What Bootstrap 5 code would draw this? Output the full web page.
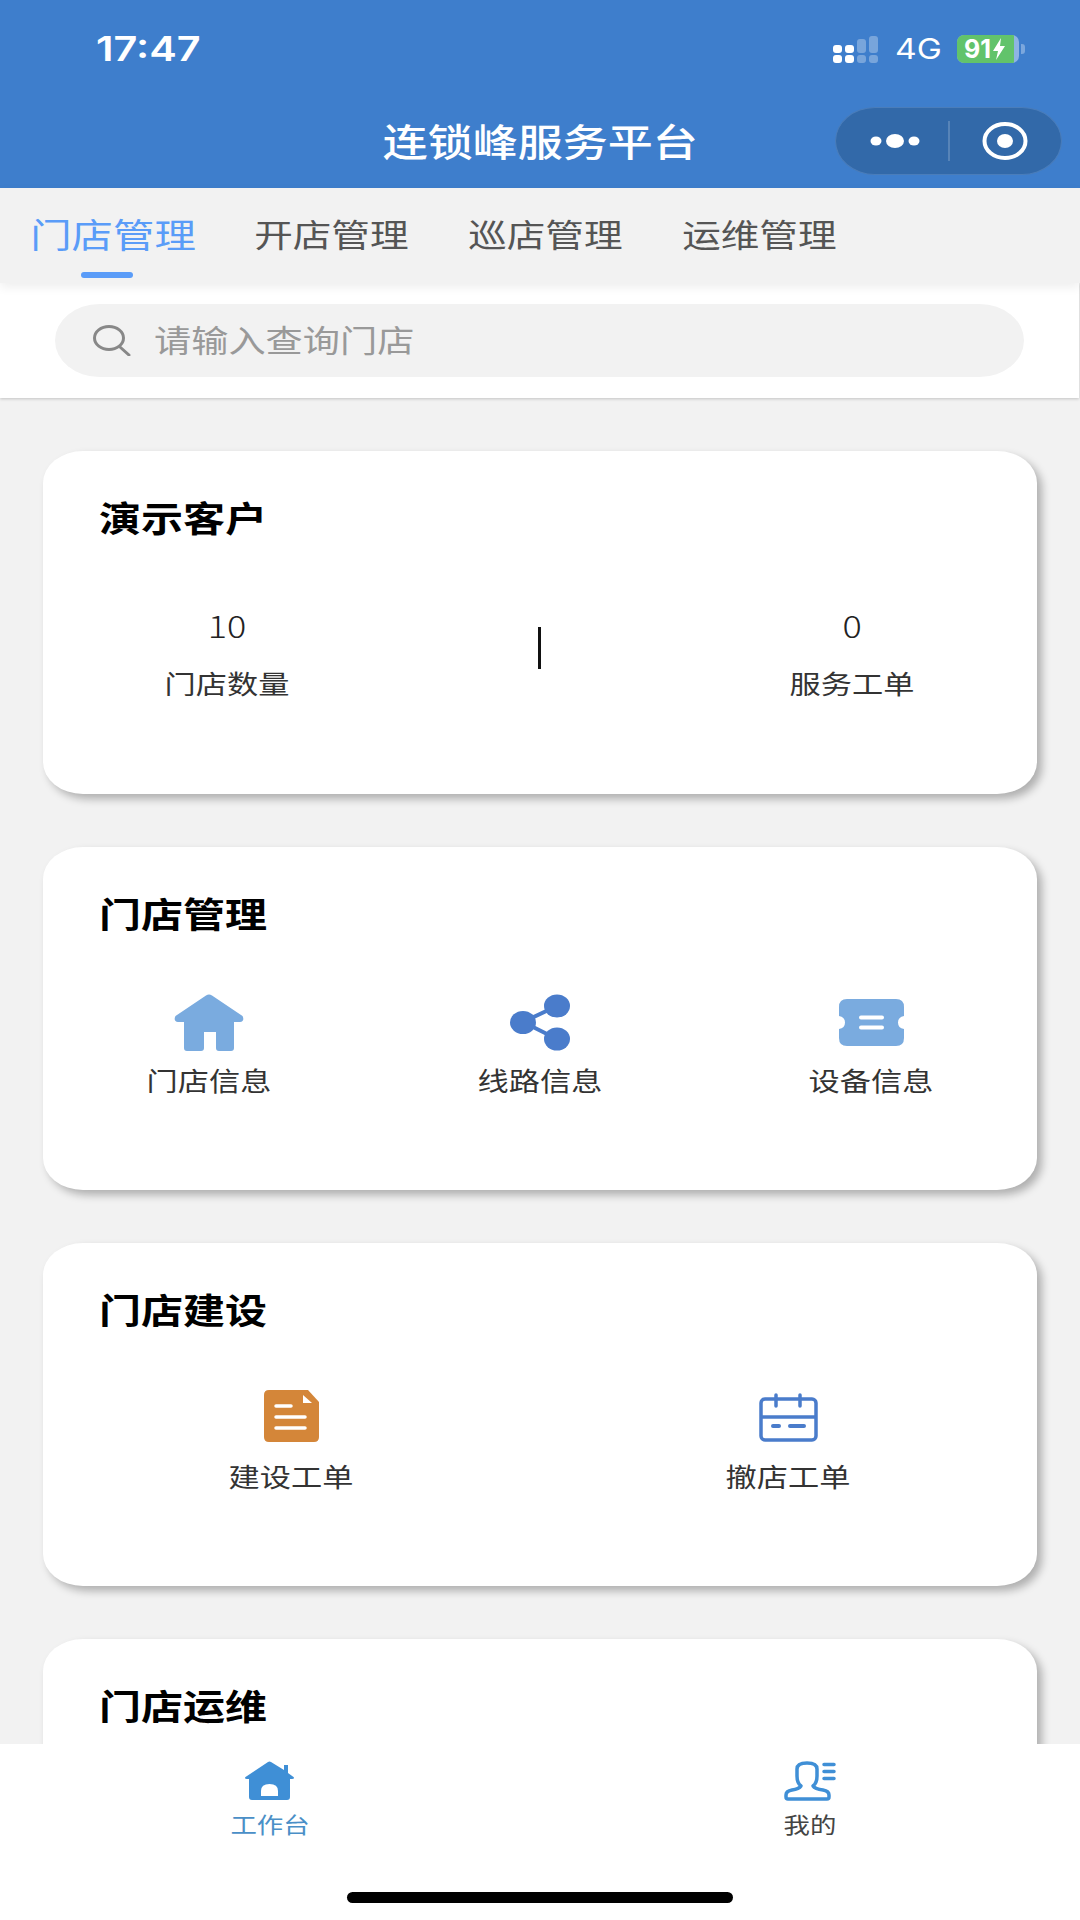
<!DOCTYPE html>
<html lang="zh-CN">
<head>
<meta charset="utf-8">
<title>连锁峰服务平台</title>
<link href="https://cdn.jsdelivr.net/npm/bootstrap@5.3.0/dist/css/bootstrap.min.css" rel="stylesheet">
<style>
html,body{height:1920px;overflow:hidden;}
body{background:#f2f2f2;font-family:"Noto Sans CJK SC","Noto Sans",sans-serif;color:#333;}
.wx{display:inline-block;transform:scaleX(1.2);white-space:nowrap;}
.wl{transform-origin:left center;}
.app-head{background:#3e7ecc;height:188px;color:#fff;}
.status-row{height:98px;padding:0 55px 0 96px;}
.clock{font:600 34.5px/1 Inter,sans-serif;}
.net{font:400 28px/1 Inter,sans-serif;margin:0 16px 0 18px;width:45px;text-align:center;}
.batt{height:28px;width:62px;border-radius:7px;overflow:hidden;background:#8eb4e3;}
.batt-fill{width:57px;background:#62c36b;font:700 25px/28px Inter,sans-serif;padding-left:7px;gap:1px;}
.batt-tip{width:4px;height:10px;background:#7ba7dd;border-radius:0 3px 3px 0;margin-left:2px;}
.title-row{display:grid;grid-template-columns:1fr auto 1fr;height:86px;align-items:center;}
.app-title{font-size:37.5px;font-weight:500;line-height:44px;margin-top:-2px;}
.capsule{width:227px;height:68px;background:#3269a9;border:1px solid #4a7dba;border-radius:40px/34px;margin-right:18px;justify-self:end;}
.cap-dots{margin-left:33px;}
.cap-div{width:2px;height:40px;background:rgba(255,255,255,.18);margin:0 31px 0 27px;}
.tab-strip{background:#f2f2f2;height:95px;padding-left:6px;position:relative;z-index:2;box-shadow:0 4px 10px rgba(0,0,0,.07);}
.tab-item{width:214px;padding-top:25px;color:#555;font-size:32.2px;line-height:40px;}
.tab-on{color:#5a9cf8;font-size:34.5px;margin-right:4px;}
.tab-bar{width:52px;height:6px;border-radius:3px;background:#5a9cf8;margin:19px 12px 0 0;}
.search-panel{background:#fff;height:115px;padding:21px 55px 0 55px;margin-right:1px;box-shadow:0 1px 3px rgba(0,0,0,.2);position:relative;}
.search-pill{background:#f2f2f2;height:73px;border-radius:45px/37px;padding-left:38px;color:#999;font-size:31px;}
.search-text{margin-left:23px;margin-top:-2px;}
.cards-area{padding:53px 43px 0;}
.tile{height:343px;border:0;border-radius:40px/32px;background:#fff;box-shadow:5px 5px 8px rgba(0,0,0,.28);padding:46px 0 0;margin-bottom:53px;}
.tile-end{height:240px;margin-bottom:0;}
.tile-head{font-size:35px;line-height:40px;font-weight:700;color:#000;padding-left:56px;}
.stat-row{margin-top:70px;padding:0 85px 0 84px;}
.stat-cell{width:200px;}
.stat-num{font-size:30px;line-height:36px;font-weight:300;color:#222;}
.stat-label{font-size:26px;line-height:36px;margin-top:22px;color:#333;}
.stat-line{width:3px;height:42px;background:#111;margin-top:20px;}
.fn-row{margin:61px 0 0;}
.fn-box{height:60px;}
.fn-label{font-size:26px;line-height:36px;margin-top:8px;color:#333;}
.dock{position:fixed;left:0;right:0;bottom:0;height:176px;background:#fff;z-index:5;}
.dock-icon{height:42px;margin-top:17px;}
.dock-label{font-size:22px;line-height:30px;margin-top:5px;color:#444;}
.dock-on{color:#4a8fc7;}
.home-bar{position:absolute;left:347px;bottom:17px;width:386px;height:11px;border-radius:6px;background:#000;}
</style>
</head>
<body>
<header class="app-head">
  <div class="status-row d-flex align-items-center justify-content-between">
    <span class="clock wx wl">17:47</span>
    <div class="d-flex align-items-center">
      <svg width="45" height="27" viewBox="0 0 45 27" fill="#fff">
        <rect x="0" y="9" width="9" height="8" rx="3"/><rect x="0" y="19" width="9" height="8" rx="3"/>
        <rect x="12" y="9" width="9" height="8" rx="3"/><rect x="12" y="19" width="9" height="8" rx="3"/>
        <g fill-opacity=".3"><rect x="24" y="3" width="9" height="14" rx="3"/><rect x="24" y="19" width="9" height="8" rx="3"/>
        <rect x="36" y="0" width="9" height="17" rx="3"/><rect x="36" y="19" width="9" height="8" rx="3"/></g>
      </svg>
      <span class="net wx">4G</span>
      <div class="batt d-flex"><div class="batt-fill d-flex align-items-center">91<svg width="14" height="22" viewBox="0 0 14 22" fill="#fff"><path d="M9 0 1 13h5l-2 9 9-14H8z"/></svg></div></div>
      <div class="batt-tip"></div>
    </div>
  </div>
  <div class="title-row">
    <span></span>
    <span class="app-title wx">连锁峰服务平台</span>
    <div class="capsule d-flex align-items-center">
      <svg class="cap-dots" width="52" height="16" viewBox="0 0 52 16" fill="#fff"><ellipse cx="7" cy="8" rx="5.5" ry="4.5"/><ellipse cx="26" cy="8" rx="9" ry="7"/><ellipse cx="45" cy="8" rx="5.5" ry="4.5"/></svg>
      <div class="cap-div"></div>
      <svg width="48" height="40" viewBox="0 0 48 40"><ellipse cx="24" cy="20" rx="20.5" ry="17" fill="none" stroke="#fff" stroke-width="4"/><ellipse cx="24" cy="20" rx="8" ry="7" fill="#fff"/></svg>
    </div>
  </div>
</header>

<nav class="tab-strip d-flex">
  <div class="tab-item tab-on d-flex flex-column align-items-center"><span class="wx">门店管理</span><div class="tab-bar"></div></div>
  <div class="tab-item text-center"><span class="wx">开店管理</span></div>
  <div class="tab-item text-center"><span class="wx">巡店管理</span></div>
  <div class="tab-item text-center"><span class="wx">运维管理</span></div>
</nav>

<div class="search-panel">
  <div class="search-pill d-flex align-items-center">
    <svg width="38" height="31" viewBox="0 0 38 31" fill="none" stroke="#888" stroke-width="3"><ellipse cx="16" cy="13" rx="14.5" ry="11.5"/><path d="M27 22l9 8" stroke-linecap="round"/></svg>
    <span class="search-text wx wl">请输入查询门店</span>
  </div>
</div>

<main class="cards-area">
  <section class="card tile">
    <div class="tile-head"><span class="wx wl">演示客户</span></div>
    <div class="stat-row d-flex justify-content-between align-items-start">
      <div class="stat-cell text-center"><div class="stat-num"><span class="wx">10</span></div><div class="stat-label"><span class="wx">门店数量</span></div></div>
      <div class="stat-line"></div>
      <div class="stat-cell text-center"><div class="stat-num"><span class="wx">0</span></div><div class="stat-label"><span class="wx">服务工单</span></div></div>
    </div>
  </section>

  <section class="card tile">
    <div class="tile-head"><span class="wx wl">门店管理</span></div>
    <div class="row g-0 fn-row text-center">
      <div class="col-4">
        <div class="fn-box d-flex justify-content-center">
          <svg width="70" height="57" viewBox="0 0 70 57" fill="#7aabdf"><path d="M32 1.500Q35-.5 38 1.500L68.500 22Q71 27 66 28H60V54Q60 57 57 57H45Q42 57 42 54V38H30V54Q30 57 27 57H13Q10 57 10 54V28H4Q-1 27 1.500 22Z"/></svg>
        </div>
        <div class="fn-label"><span class="wx">门店信息</span></div>
      </div>
      <div class="col-4">
        <div class="fn-box d-flex justify-content-center">
          <svg width="60" height="57" viewBox="0 0 60 57" fill="#4a7ccb"><path d="M13 28 47 12M13 28 47 45" stroke="#4a7ccb" stroke-width="4"/><ellipse cx="47" cy="12" rx="13" ry="11.500"/><ellipse cx="13" cy="28.500" rx="13" ry="11.500"/><ellipse cx="47" cy="45" rx="13" ry="11.500"/></svg>
        </div>
        <div class="fn-label"><span class="wx">线路信息</span></div>
      </div>
      <div class="col-4">
        <div class="fn-box d-flex justify-content-center">
          <svg width="65" height="57" viewBox="0 0 65 57"><path fill="#7aabdf" d="M8 5H57Q65 5 65 13V22Q59 23 59 28.500T65 35V44Q65 52 57 52H8Q0 52 0 44V35Q6 34 6 28.500T0 22V13Q0 5 8 5Z"/><path d="M22 23.500H43M22 33.500H43" stroke="#fff" stroke-width="4" stroke-linecap="round"/></svg>
        </div>
        <div class="fn-label"><span class="wx">设备信息</span></div>
      </div>
    </div>
  </section>

  <section class="card tile">
    <div class="tile-head"><span class="wx wl">门店建设</span></div>
    <div class="row g-0 fn-row text-center">
      <div class="col-6">
        <div class="fn-box d-flex justify-content-center">
          <svg width="55" height="52" viewBox="0 0 55 52"><path fill="#d48639" d="M5 0H44L55 12V47Q55 52 50 52H5Q0 52 0 47V5Q0 0 5 0Z"/><path fill="#fff" d="M39 5 48 13H39Z"/><path d="M12 16H27M12 27H41M12 38H41" stroke="#fff" stroke-width="3.500" stroke-linecap="round"/></svg>
        </div>
        <div class="fn-label"><span class="wx">建设工单</span></div>
      </div>
      <div class="col-6">
        <div class="fn-box d-flex justify-content-center">
          <svg width="59" height="52" viewBox="0 0 59 52" fill="none" stroke="#4a7ccb" stroke-width="3.500" stroke-linecap="round"><rect x="2" y="9" width="55" height="41" rx="4"/><path d="M2 27H57" stroke-linecap="butt"/><path d="M17 5V16M41 5V16"/><path d="M14 36H20M31 36H45" stroke-width="4"/></svg>
        </div>
        <div class="fn-label"><span class="wx">撤店工单</span></div>
      </div>
    </div>
  </section>

  <section class="card tile tile-end">
    <div class="tile-head"><span class="wx wl">门店运维</span></div>
  </section>
</main>

<footer class="dock">
  <div class="row g-0 text-center">
    <div class="col-6">
      <div class="dock-icon d-flex justify-content-center">
        <svg width="50" height="39" viewBox="0 0 50 39"><path fill="#3f8fd6" d="M23 1Q24.500 0 26 1L39 9V4H43V12L48.500 16Q50 18 47 18H45V36Q45 39 42 39H7Q4 39 4 36V18H2Q-1 18 .5 16Z"/><path fill="#fff" d="M16 35V30Q16 23 24.500 23T33 30V35Z"/></svg>
      </div>
      <div class="dock-label dock-on"><span class="wx">工作台</span></div>
    </div>
    <div class="col-6">
      <div class="dock-icon d-flex justify-content-center">
        <svg width="52" height="40" viewBox="0 0 52 40" fill="none" stroke="#3f8fd6" stroke-width="3.500" stroke-linecap="round" stroke-linejoin="round"><path d="M13 8Q13 2 23 2T33 8V15Q33 22 29 25 31 28 39 29 45 30 45 34V36Q45 38 43 38H4Q2 38 2 36V34Q2 30 8 29 15 28 17 25 13 22 13 15Z"/><path d="M40 3.500H50M40 10.500H50M40 17.500H50"/></svg>
      </div>
      <div class="dock-label"><span class="wx">我的</span></div>
    </div>
  </div>
  <div class="home-bar"></div>
</footer>
<script src="https://cdn.jsdelivr.net/npm/bootstrap@5.3.0/dist/js/bootstrap.bundle.min.js"></script>
</body>
</html>
